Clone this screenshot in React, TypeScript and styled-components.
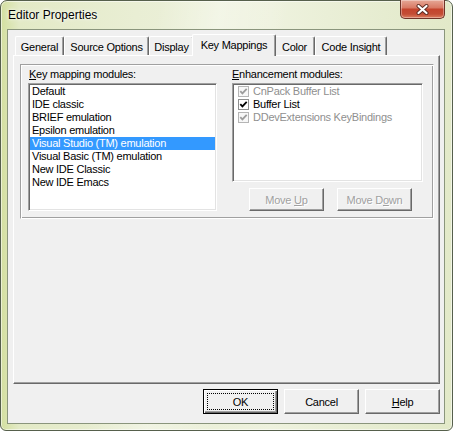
import React from 'react';
import styled, { createGlobalStyle, css } from 'styled-components';

const UI_FONT = `"Liberation Sans", Arial, sans-serif`;

const GlobalStyle = createGlobalStyle`
  html, body { margin: 0; padding: 0; background: #ffffff; }
  body { width: 453px; height: 431px; overflow: hidden; }
  #root { width: 453px; height: 431px; }
`;

const Window = styled.div`
  box-sizing: border-box;
  width: 453px;
  height: 431px;
  border: 1px solid #56604c;
  border-radius: 7px 7px 6px 6px;
  background:
    linear-gradient(100deg, rgba(255,255,255,0) 30%, rgba(255,255,255,0.35) 42%, rgba(255,255,255,0) 55%),
    linear-gradient(90deg, #d3dfa0 0%, #e3eac6 4%, #e9eed4 30%, #eef2de 60%, #e6ecd0 85%, #e2e9c8 100%);
  box-shadow: inset 0 0 0 1px rgba(255, 255, 255, 0.55);
  display: flex;
  flex-direction: column;
  padding: 0 7px 6px 6px;
  font-family: ${UI_FONT};
  color: #000;
`;

const TitleBar = styled.div`
  height: 28px;
  display: flex;
  align-items: flex-start;
  justify-content: space-between;
`;

const Title = styled.div`
  font-size: 12px;
  line-height: 12px;
  margin: 8px 0 0 1px;
  text-shadow: 0 0 5px #ffffff, 0 0 2px #ffffff;
`;

const CloseButton = styled.div`
  box-sizing: border-box;
  width: 45px;
  height: 19px;
  margin-top: -1px;
  border: 1px solid #6e3328;
  border-top: none;
  border-radius: 0 0 5px 5px;
  background: linear-gradient(#e6a897 0%, #d97b66 42%, #c4442d 52%, #c34d35 78%, #dc7d5e 100%);
  box-shadow: inset 0 0 0 1px rgba(255, 255, 255, 0.35);
  display: flex;
  align-items: center;
  justify-content: center;
`;

const Client = styled.div`
  flex: 1;
  display: flex;
  flex-direction: column;
  border: 1px solid #8a957c;
  background: #f0f0f0;
  padding: 4px 4px 9px 5px;
  font-size: 11px;
  letter-spacing: -0.25px;
`;

const TabStrip = styled.div`
  display: flex;
  align-items: flex-end;
  height: 21px;
  padding-left: 2px;
  position: relative;
  z-index: 1;
`;

const Tab = styled.div<{ $w: number; $active?: boolean }>`
  box-sizing: border-box;
  width: ${(p) => p.$w}px;
  height: 19px;
  border: 1px solid;
  border-color: #ffffff #696969 transparent #ffffff;
  border-bottom: none;
  border-radius: 2px 2px 0 0;
  box-shadow: inset -1px 0 0 #a0a0a0;
  background: #f0f0f0;
  display: flex;
  align-items: center;
  justify-content: center;
  padding-top: 2px;
  white-space: nowrap;
  ${(p) =>
    p.$active &&
    css`
      width: ${p.$w + 4}px;
      height: 22px;
      margin: 0 -2px -1px;
      padding-top: 0;
      padding-bottom: 1px;
      position: relative;
      z-index: 2;
    `}
`;

const TabPage = styled.div`
  flex: 1;
  border: 1px solid;
  border-color: #ffffff #696969 #696969 #ffffff;
  box-shadow: inset -1px -1px 0 #a0a0a0;
  background: #f0f0f0;
  padding: 8px 5px 0 6px;
`;

const Panel = styled.div`
  border: 1px solid;
  border-color: #a0a0a0 #ffffff #ffffff #a0a0a0;
  box-shadow: inset 1px 1px 0 #ffffff, inset -1px -1px 0 #a0a0a0;
  display: grid;
  grid-template-columns: 189px 191px;
  column-gap: 15px;
  align-items: start;
  padding: 3px 0 7px 7px;
`;

const Group = styled.div`
  display: flex;
  flex-direction: column;
`;

const GroupLabel = styled.div<{ $indent: number }>`
  height: 13px;
  line-height: 13px;
  margin-bottom: 2px;
  padding-left: ${(p) => p.$indent}px;
  white-space: nowrap;
`;

const Accel = styled.span`
  text-decoration: underline;
  text-underline-offset: 1px;
`;

const ListBox = styled.div<{ $h: number }>`
  box-sizing: border-box;
  height: ${(p) => p.$h}px;
  background: #ffffff;
  border: 1px solid;
  border-color: #a0a0a0 #ffffff #ffffff #a0a0a0;
  box-shadow: inset 1px 1px 0 #696969, inset -1px -1px 0 #e3e3e3;
  padding: 1px;
  overflow: hidden;
`;

const ListItem = styled.div<{ $selected?: boolean }>`
  height: 13px;
  line-height: 13px;
  padding-left: 2px;
  white-space: nowrap;
  ${(p) =>
    p.$selected &&
    css`
      background: #3399ff;
      color: #ffffff;
    `}
`;

const CheckItem = styled.div<{ $disabled?: boolean }>`
  display: flex;
  align-items: center;
  gap: 4px;
  height: 13px;
  line-height: 13px;
  padding-left: 4px;
  white-space: nowrap;
  color: ${(p) => (p.$disabled ? '#8f8f8f' : '#000000')};
`;

const MoveRow = styled.div`
  display: flex;
  gap: 13px;
  margin-top: 6px;
  padding-left: 17px;
`;

const Button = styled.div<{ $h: number; $disabled?: boolean; $default?: boolean }>`
  box-sizing: border-box;
  width: 75px;
  height: ${(p) => p.$h}px;
  background: #f0f0f0;
  border: 1px solid;
  border-color: #ffffff #696969 #696969 #ffffff;
  box-shadow: inset -1px -1px 0 #a0a0a0;
  display: flex;
  align-items: center;
  justify-content: center;
  white-space: nowrap;
  color: ${(p) => (p.$disabled ? '#a0a0a0' : '#000000')};
  ${(p) =>
    p.$disabled &&
    css`
      text-shadow: 1px 1px 0 #ffffff;
    `}
  ${(p) =>
    p.$default &&
    css`
      border-color: #000000;
      box-shadow: inset 1px 1px 0 #ffffff, inset -1px -1px 0 #696969, inset -2px -2px 0 #a0a0a0;
      padding: 3px;
    `}
`;

const FocusBox = styled.span`
  flex: 1;
  align-self: stretch;
  border: 1px dotted #000000;
  display: flex;
  align-items: center;
  justify-content: center;
`;

const DialogButtons = styled.div`
  display: flex;
  justify-content: flex-end;
  gap: 6px;
  margin-top: 5px;
`;

const CloseGlyph = () => (
  <svg width="13" height="11" viewBox="0 0 13 11">
    <path d="M2.5 2 L10.5 9 M10.5 2 L2.5 9" stroke="#5a2a22" strokeWidth="4" strokeLinecap="round" />
    <path d="M2.5 2 L10.5 9 M10.5 2 L2.5 9" stroke="#ffffff" strokeWidth="2.2" strokeLinecap="round" />
  </svg>
);

const CheckBox = ({ disabled }: { disabled?: boolean }) => (
  <svg width="11" height="11" viewBox="0 0 11 11">
    <rect x="0.5" y="0.5" width="10" height="10" fill={disabled ? '#f7f7f7' : '#ffffff'} stroke={disabled ? '#b5b5b5' : '#8e8f8f'} />
    <path d="M2.3 5.2 L4.4 7.4 L8.7 2.9" fill="none" stroke={disabled ? '#9c9c9c' : '#000000'} strokeWidth="1.8" />
  </svg>
);

const tabs = [
  { label: 'General', w: 49 },
  { label: 'Source Options', w: 85 },
  { label: 'Display', w: 45 },
  { label: 'Key Mappings', w: 80, active: true },
  { label: 'Color', w: 41 },
  { label: 'Code Insight', w: 72 },
];

const keyModules = [
  'Default',
  'IDE classic',
  'BRIEF emulation',
  'Epsilon emulation',
  'Visual Studio (TM) emulation',
  'Visual Basic (TM) emulation',
  'New IDE Classic',
  'New IDE Emacs',
];

const enhancements = [
  { label: 'CnPack Buffer List', disabled: true },
  { label: 'Buffer List', disabled: false },
  { label: 'DDevExtensions KeyBindings', disabled: true },
];

export default function App() {
  return (
    <>
      <GlobalStyle />
      <Window>
        <TitleBar>
          <Title>Editor Properties</Title>
          <CloseButton>
            <CloseGlyph />
          </CloseButton>
        </TitleBar>
        <Client>
          <TabStrip>
            {tabs.map((t) => (
              <Tab key={t.label} $w={t.w} $active={t.active}>
                {t.label}
              </Tab>
            ))}
          </TabStrip>
          <TabPage>
            <Panel>
              <Group>
                <GroupLabel $indent={1}>
                  <Accel>K</Accel>ey mapping modules:
                </GroupLabel>
                <ListBox $h={128}>
                  {keyModules.map((m) => (
                    <ListItem key={m} $selected={m === 'Visual Studio (TM) emulation'}>
                      {m}
                    </ListItem>
                  ))}
                </ListBox>
              </Group>
              <Group>
                <GroupLabel $indent={0}>
                  <Accel>E</Accel>nhancement modules:
                </GroupLabel>
                <ListBox $h={99}>
                  {enhancements.map((e) => (
                    <CheckItem key={e.label} $disabled={e.disabled}>
                      <CheckBox disabled={e.disabled} />
                      {e.label}
                    </CheckItem>
                  ))}
                </ListBox>
                <MoveRow>
                  <Button $h={23} $disabled>
                    Move&nbsp;<Accel>U</Accel>p
                  </Button>
                  <Button $h={23} $disabled>
                    Move D<Accel>o</Accel>wn
                  </Button>
                </MoveRow>
              </Group>
            </Panel>
          </TabPage>
          <DialogButtons>
            <Button $h={25} $default>
              <FocusBox>OK</FocusBox>
            </Button>
            <Button $h={25}>Cancel</Button>
            <Button $h={25}>
              <Accel>H</Accel>elp
            </Button>
          </DialogButtons>
        </Client>
      </Window>
    </>
  );
}
